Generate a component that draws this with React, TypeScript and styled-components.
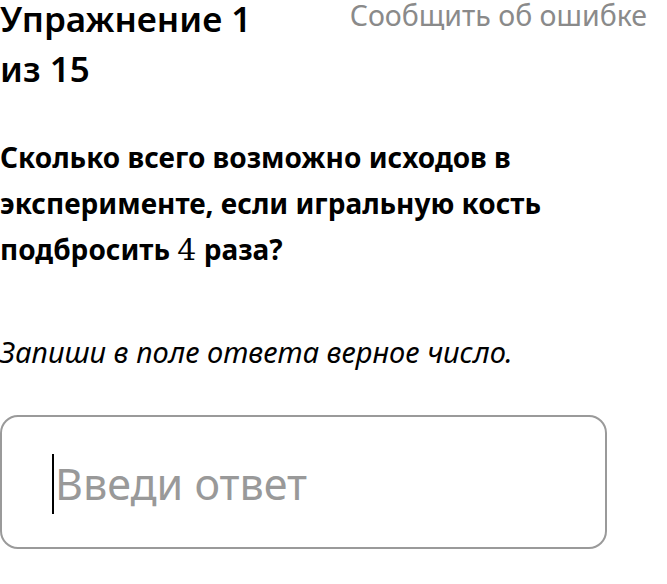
import React from "react";
import styled, { createGlobalStyle } from "styled-components";

const Global = createGlobalStyle`
  html, body {
    margin: 0;
    padding: 0;
    background: #fff;
  }
  body {
    font-family: "Noto Sans", "Open Sans", sans-serif;
    color: #000;
  }
`;

const Page = styled.main`
  width: 667px;
  display: flex;
  flex-direction: column;
`;

const Header = styled.header`
  display: flex;
  justify-content: space-between;
  align-items: flex-start;
  padding-right: 20px;
`;

const Title = styled.h1`
  margin: -6px 0 0;
  width: 280px;
  font-size: 35px;
  line-height: 50px;
  font-weight: 600;
`;

const Report = styled.a`
  margin-top: -3px;
  font-size: 28.5px;
  line-height: 36px;
  color: #8a8a8a;
  text-decoration: none;
  white-space: nowrap;
  cursor: pointer;
`;

const Question = styled.p`
  margin: 40px 0 0;
  width: 600px;
  font-size: 28px;
  line-height: 46px;
  font-weight: 700;
`;

const MathNum = styled.span`
  font-family: "DejaVu Serif", "Liberation Serif", serif;
  font-weight: 400;
  font-size: 30px;
  line-height: 1;
`;

const Hint = styled.p`
  margin: 62px 0 0;
  font-size: 29px;
  line-height: 36px;
  font-style: italic;
`;

const AnswerBox = styled.label`
  margin-top: 45px;
  width: 607px;
  height: 134px;
  box-sizing: border-box;
  border: 2px solid #9a9a9a;
  border-radius: 18px;
  display: flex;
  align-items: center;
  padding-left: 50px;
  padding-top: 4px;
`;

const Caret = styled.span`
  width: 2px;
  height: 60px;
  background: #000;
  margin-right: 1px;
`;

const Placeholder = styled.span`
  font-size: 43px;
  color: #999;
  line-height: 50px;
`;

export default function App() {
  return (
    <>
      <Global />
      <Page>
        <Header>
          <Title>Упражнение 1 из 15</Title>
          <Report>Сообщить об ошибке</Report>
        </Header>
        <Question>
          Сколько всего возможно исходов в эксперименте, если игральную кость
          подбросить <MathNum>4</MathNum> раза?
        </Question>
        <Hint>Запиши в поле ответа верное число.</Hint>
        <AnswerBox>
          <Caret />
          <Placeholder>Введи ответ</Placeholder>
        </AnswerBox>
      </Page>
    </>
  );
}
